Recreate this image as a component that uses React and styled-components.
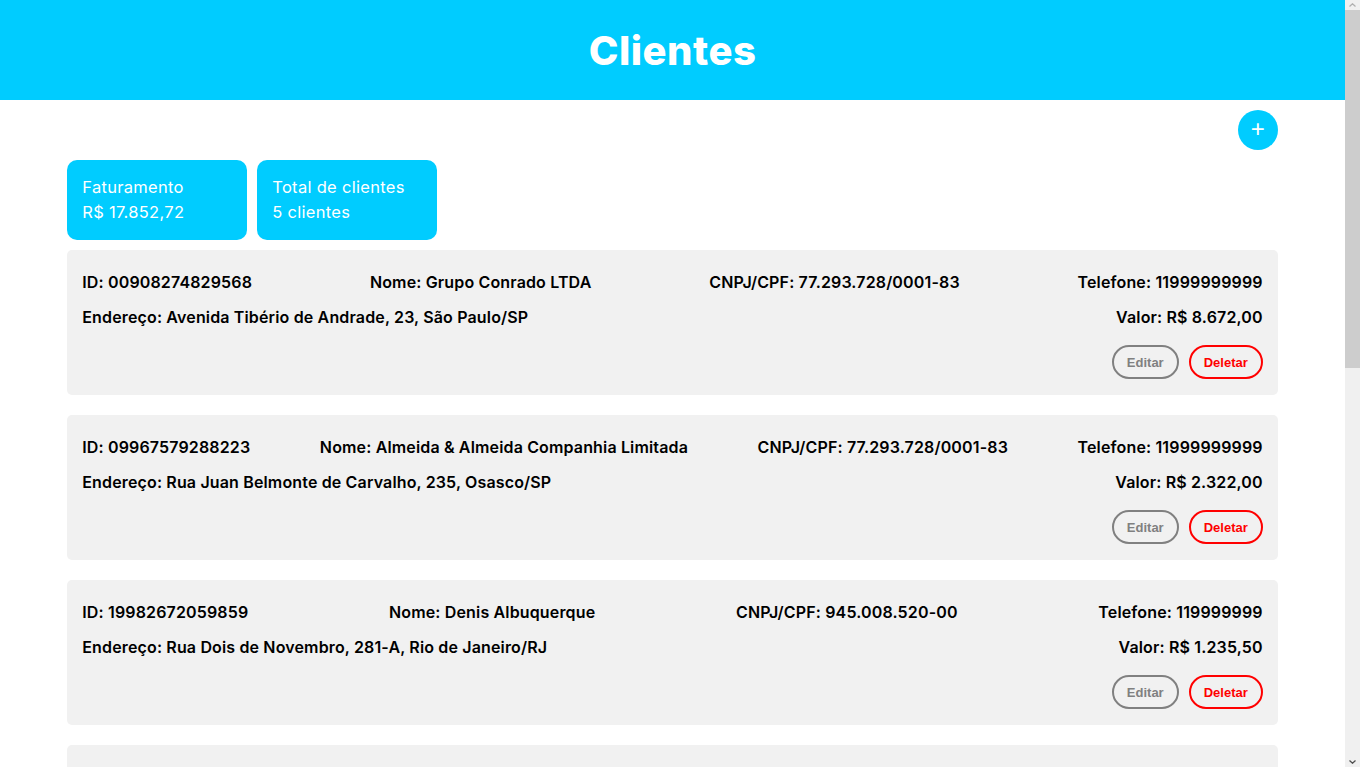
import React from 'react';
import styled, { createGlobalStyle } from 'styled-components';

const GlobalStyle = createGlobalStyle`
  * {
    box-sizing: border-box;
  }
  html, body {
    overflow: hidden;
  }
  body {
    margin: 0;
    font-family: Inter, "Noto Sans", sans-serif;
    background: #fff;
    color: #000;
  }
  #root {
    padding-right: 15px;
  }
`;

const ScrollTrack = styled.div`
  position: fixed;
  top: 0;
  right: 0;
  width: 15px;
  height: 100vh;
  background: #f0f0f0;
  display: flex;
  flex-direction: column;
`;

const ScrollArrow = styled.div`
  height: 10px;
  display: flex;
  align-items: center;
  justify-content: center;
`;

const ScrollThumb = styled.div`
  height: 358px;
  background: #cdcdcd;
`;

const ScrollRest = styled.div`
  flex: 1;
`;

const Header = styled.header`
  height: 100px;
  background-color: #00ccff;
  display: flex;
  align-items: center;
  justify-content: center;
`;

const Title = styled.h1`
  margin: 0;
  color: #fff;
  font-size: 40px;
  font-weight: 800;
  letter-spacing: 0.5px;
`;

const Main = styled.main`
  width: 90%;
  margin: 0 auto;
  padding: 10px 0 20px;
`;

const Toolbar = styled.div`
  display: flex;
  justify-content: flex-end;
`;

const AddButton = styled.button`
  width: 40px;
  height: 40px;
  border-radius: 50%;
  border: none;
  background-color: #00ccff;
  color: #fff;
  font-size: 24px;
  line-height: 1;
  display: flex;
  align-items: center;
  justify-content: center;
  cursor: pointer;
  padding: 0 0 2px;
`;

const Summary = styled.div`
  display: flex;
  gap: 10px;
  margin: 10px 0;
`;

const SummaryCard = styled.div`
  width: 180px;
  height: 80px;
  padding: 15px;
  border-radius: 10px;
  background-color: #00ccff;
  color: #fff;
  font-size: 16.5px;
  letter-spacing: 0.3px;
  line-height: 25px;
`;

const ClientList = styled.div`
  display: flex;
  flex-direction: column;
  gap: 20px;
`;

const ClientCard = styled.div`
  background-color: #f1f1f1;
  border-radius: 5px;
  padding: 14px 15px 16px;
`;

const InfoRow = styled.div`
  display: flex;
  justify-content: space-between;
  align-items: center;
  min-height: 35px;
  font-size: 16px;
  font-weight: 600;
  letter-spacing: 0.15px;
`;

const Actions = styled.div`
  display: flex;
  justify-content: flex-end;
  gap: 10px;
  margin-top: 11px;
`;

const ActionButton = styled.button`
  height: 34px;
  padding: 0 13px;
  border-radius: 20px;
  border: 2px solid ${(p) => p.$color};
  color: ${(p) => p.$color};
  background: transparent;
  font-family: "Liberation Sans", Arial, sans-serif;
  font-size: 13px;
  font-weight: 700;
  cursor: pointer;
`;

const clients = [
  {
    id: '00908274829568',
    nome: 'Grupo Conrado LTDA',
    doc: '77.293.728/0001-83',
    telefone: '11999999999',
    endereco: 'Avenida Tibério de Andrade, 23, São Paulo/SP',
    valor: 'R$ 8.672,00',
  },
  {
    id: '09967579288223',
    nome: 'Almeida & Almeida Companhia Limitada',
    doc: '77.293.728/0001-83',
    telefone: '11999999999',
    endereco: 'Rua Juan Belmonte de Carvalho, 235, Osasco/SP',
    valor: 'R$ 2.322,00',
  },
  {
    id: '19982672059859',
    nome: 'Denis Albuquerque',
    doc: '945.008.520-00',
    telefone: '119999999',
    endereco: 'Rua Dois de Novembro, 281-A, Rio de Janeiro/RJ',
    valor: 'R$ 1.235,50',
  },
  {
    id: '27716390045512',
    nome: 'Marina Souza Tavares',
    doc: '312.774.180-45',
    telefone: '11988887777',
    endereco: 'Rua Augusta, 1500, São Paulo/SP',
    valor: 'R$ 3.100,00',
  },
  {
    id: '30451987263340',
    nome: 'Padaria Pão Dourado ME',
    doc: '12.845.331/0001-09',
    telefone: '11977776666',
    endereco: 'Avenida Paulista, 900, São Paulo/SP',
    valor: 'R$ 2.523,22',
  },
];

const Chevron = ({ up, color }) => (
  <svg width="7" height="4" viewBox="0 0 7 4">
    <path
      d={up ? 'M0.5 3.5 L3.5 0.8 L6.5 3.5' : 'M0.5 0.5 L3.5 3.2 L6.5 0.5'}
      fill="none"
      stroke={color}
      strokeWidth="1.3"
    />
  </svg>
);

export default function App() {
  return (
    <>
      <GlobalStyle />
      <Header>
        <Title>Clientes</Title>
      </Header>
      <Main>
        <Toolbar>
          <AddButton>+</AddButton>
        </Toolbar>
        <Summary>
          <SummaryCard>
            <div>Faturamento</div>
            <div>R$ 17.852,72</div>
          </SummaryCard>
          <SummaryCard>
            <div>Total de clientes</div>
            <div>5 clientes</div>
          </SummaryCard>
        </Summary>
        <ClientList>
          {clients.map((c) => (
            <ClientCard key={c.id}>
              <InfoRow>
                <span>ID: {c.id}</span>
                <span>Nome: {c.nome}</span>
                <span>CNPJ/CPF: {c.doc}</span>
                <span>Telefone: {c.telefone}</span>
              </InfoRow>
              <InfoRow>
                <span>Endereço: {c.endereco}</span>
                <span>Valor: {c.valor}</span>
              </InfoRow>
              <Actions>
                <ActionButton $color="#808080">Editar</ActionButton>
                <ActionButton $color="#ff0000">Deletar</ActionButton>
              </Actions>
            </ClientCard>
          ))}
        </ClientList>
      </Main>
      <ScrollTrack>
        <ScrollArrow>
          <Chevron up color="#b0b0b0" />
        </ScrollArrow>
        <ScrollThumb />
        <ScrollRest />
        <ScrollArrow>
          <Chevron color="#505050" />
        </ScrollArrow>
      </ScrollTrack>
    </>
  );
}
